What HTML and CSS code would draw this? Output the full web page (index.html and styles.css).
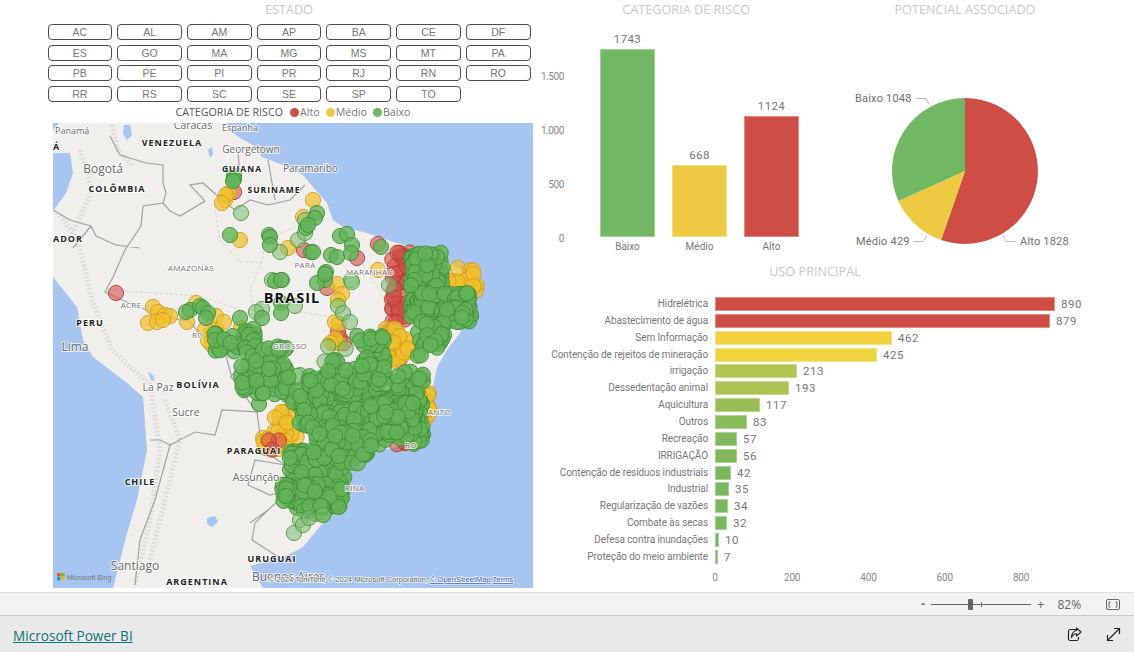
FILE: index.html
```html
<!DOCTYPE html>
<html lang="pt-BR">
<head>
<meta charset="utf-8">
<title>Microsoft Power BI</title>
<link rel="stylesheet" href="styles.css">
</head>
<body>
<div class="app">
  <main class="report">
    <section class="left">
      <h2 class="title">ESTADO</h2>
      <div class="slicer">
        <button>AC</button><button>AL</button><button>AM</button><button>AP</button><button>BA</button><button>CE</button><button>DF</button>
        <button>ES</button><button>GO</button><button>MA</button><button>MG</button><button>MS</button><button>MT</button><button>PA</button>
        <button>PB</button><button>PE</button><button>PI</button><button>PR</button><button>RJ</button><button>RN</button><button>RO</button>
        <button>RR</button><button>RS</button><button>SC</button><button>SE</button><button>SP</button><button>TO</button>
      </div>
      <div class="legend">
        <strong>CATEGORIA DE RISCO</strong>
        <span class="key"><i class="dot red"></i>Alto</span>
        <span class="key"><i class="dot yellow"></i>Médio</span>
        <span class="key"><i class="dot green"></i>Baixo</span>
      </div>
      <svg class="map" viewBox="53 123 480 465" xmlns="http://www.w3.org/2000/svg">
        <rect x="53" y="123" width="480" height="465" fill="#a6c5f0"/>
        <path class="land" d="M59 123H225L232 132 240 138 253 145 262 157 283 165 303 175 313 187 327 203 333 220 343 227 367 233 397 243 417 248 450 263 473 277 478 290 473 313 460 333 447 350 437 367 430 400 427 417 417 443 383 450 350 463 345 483 343 500 317 530 303 547 298 550 283 557 262 563 250 566 263 588H113L127 533 137 500 147 450 143 397 127 383 93 357 83 340 77 307 53 277V211L66 193 73 173 70 153H53V130Z"/>
        <path class="relief" d="M60 215 78 240 92 300 112 350 150 385 160 450 150 520 135 585M112 125 118 150 132 165M80 150 92 190 72 235M165 400 180 440 165 500 150 560"/>
        <path class="lake" d="M124 125h6l2 10-5 5-4-6zM207 518l8-2 3 6-6 5-5-3zM148 372l5 3 2 6-4-1zM208 150l4-3 1 7-3 4z"/>
        <path class="border" d="M110 136 120 155 146 163 163 165 163 183 166 193 163 203 143 206 141 226 125 250 113 277 105 292 122 300 146 310 160 315 190 322M163 203 170 211 180 216 205 201 190 185 203 183 222 200 235 210 250 200 268 205 290 200 305 185M53 210 70 220 91 226 96 236 116 245 140 248M73 248 91 226M190 322 205 340 225 352 232 378 250 403 257 412 222 410 215 435 195 432 170 445 160 440 150 440M257 412 262 450 285 465 255 460 248 485 270 495 290 490M250 350 230 378M285 465 290 490 268 510 255 523 252 540 280 558M170 445 155 500 140 540 135 585M268 510 250 523M268 160 275 200M238 150 240 180"/>
        <path class="state" d="M215 210 220 240 240 262 262 262 265 240 300 225M262 262 250 290 255 315 300 312 350 320M300 225 330 265 340 300 330 340M355 235 365 270 380 290M380 290 400 340 395 380M255 315 275 370 330 375 375 390M110 290 200 296 255 315"/>
        <g id="bubbles"></g>
        <g class="lbl">
          <text x="55" y="134" class="sm">Panamá</text>
          <text x="53" y="150" class="cap">Á</text>
          <text x="193" y="129" class="md" text-anchor="middle">Caracas</text>
          <text x="240" y="131" class="sm" text-anchor="middle">Espanha</text>
          <text x="172" y="146" class="cap" text-anchor="middle">VENEZUELA</text>
          <text x="251" y="153" class="sm2" text-anchor="middle">Georgetown</text>
          <text x="103" y="173" class="lg" text-anchor="middle">Bogotá</text>
          <text x="283" y="172" class="sm2">Paramaribo</text>
          <text x="242" y="172" class="cap2" text-anchor="middle">GUIANA</text>
          <text x="117" y="192" class="cap" text-anchor="middle">COLÔMBIA</text>
          <text x="274" y="193" class="cap2" text-anchor="middle">SURINAME</text>
          <text x="53" y="242" class="cap">ADOR</text>
          <text x="191" y="271" class="st" text-anchor="middle">AMAZONAS</text>
          <text x="305" y="268" class="st" text-anchor="middle">PARÁ</text>
          <text x="370" y="275" class="st" text-anchor="middle">MARANHÃO</text>
          <text x="292" y="303" class="big" text-anchor="middle">BRASIL</text>
          <text x="131" y="308" class="st" text-anchor="middle">ACRE</text>
          <text x="90" y="326" class="cap" text-anchor="middle">PERU</text>
          <text x="75" y="351" class="lg" text-anchor="middle">Lima</text>
          <text x="192" y="338" class="st">RO</text>
          <text x="290" y="349" class="st" text-anchor="middle">GROSSO</text>
        </g>
        <g class="lbl">
          <text x="198" y="388" class="cap" text-anchor="middle">BOLÍVIA</text>
          <text x="158" y="391" class="md" text-anchor="middle">La Paz</text>
          <text x="186" y="416" class="md" text-anchor="middle">Sucre</text>
          <text x="254" y="454" class="cap" text-anchor="middle">PARAGUAI</text>
          <text x="256" y="481" class="md" text-anchor="middle">Assunção</text>
          <text x="140" y="485" class="cap" text-anchor="middle">CHILE</text>
          <text x="272" y="562" class="cap" text-anchor="middle">URUGUAI</text>
          <text x="135" y="570" class="lg" text-anchor="middle">Santiago</text>
          <text x="197" y="585" class="cap" text-anchor="middle">ARGENTINA</text>
          <text x="252" y="581" class="lg">Buenos Aires</text>
          <text x="428" y="415" class="st">ANTO</text>
          <text x="405" y="448" class="st">RO</text>
          <text x="345" y="491" class="st">RINA</text>
        </g>
        <rect x="57" y="573" width="3.500" height="3.500" fill="#f25022"/><rect x="61" y="573" width="3.500" height="3.500" fill="#7fba00"/><rect x="57" y="577" width="3.500" height="3.500" fill="#00a4ef"/><rect x="61" y="577" width="3.500" height="3.500" fill="#ffb900"/>
        <text x="67" y="580" class="bing">Microsoft Bing</text>
        <text x="269" y="582" class="attr">© 2024 TomTom, © 2024 Microsoft Corporation, <tspan class="attr-link">© OpenStreetMap</tspan>  <tspan class="attr-link">Terms</tspan></text>
      </svg>
    </section>
    <section class="right">
      <div class="top">
        <div class="panel">
          <h2 class="title">CATEGORIA DE RISCO</h2>
          <div class="colchart">
            <div class="yaxis"><span>1.500</span><span>1.000</span><span>500</span><span>0</span></div>
            <div class="cols">
              <div class="col"><span class="val">1743</span><div class="colbar c-green" style="height:188px"></div><span class="cat">Baixo</span></div>
              <div class="col"><span class="val">668</span><div class="colbar c-yellow" style="height:72px"></div><span class="cat">Médio</span></div>
              <div class="col"><span class="val">1124</span><div class="colbar c-red" style="height:121px"></div><span class="cat">Alto</span></div>
            </div>
          </div>
        </div>
        <div class="panel">
          <h2 class="title">POTENCIAL ASSOCIADO</h2>
          <svg class="pie" viewBox="832 18 266 244" xmlns="http://www.w3.org/2000/svg">
            <path fill="#ce4e46" d="M965 171V98A73 73 0 1 1 941.1 240Z"/>
            <path fill="#eec944" d="M965 171 941.1 240A73 73 0 0 1 898.5 201.1Z"/>
            <path fill="#72b763" d="M965 171 898.5 201.1A73 73 0 0 1 965 98Z"/>
            <path class="leader" d="M916 98.500h10l3 6M913 241.500h10l4-6M1016 241.500h-10l-3-6"/>
            <text x="855" y="102" class="pielbl">Baixo 1048</text>
            <text x="856" y="245" class="pielbl">Médio 429</text>
            <text x="1020" y="245" class="pielbl">Alto 1828</text>
          </svg>
        </div>
      </div>
      <div class="bottom">
        <h2 class="title">USO PRINCIPAL</h2>
        <div class="hbars">
          <div class="row"><span class="rlabel">Hidrelétrica</span><div class="hbar" style="width:340px;background-color:#ce4e46"></div><span class="rval">890</span></div>
          <div class="row"><span class="rlabel">Abastecimento de água</span><div class="hbar" style="width:335px;background-color:#ce4e46"></div><span class="rval">879</span></div>
          <div class="row"><span class="rlabel">Sem Informação</span><div class="hbar" style="width:177px;background-color:#f3d03f"></div><span class="rval">462</span></div>
          <div class="row"><span class="rlabel">Contenção de rejeitos de mineração</span><div class="hbar" style="width:162px;background-color:#f0d43f"></div><span class="rval">425</span></div>
          <div class="row"><span class="rlabel">irrigação</span><div class="hbar" style="width:82px;background-color:#afc451"></div><span class="rval">213</span></div>
          <div class="row"><span class="rlabel">Dessedentação animal</span><div class="hbar" style="width:74px;background-color:#abc351"></div><span class="rval">193</span></div>
          <div class="row"><span class="rlabel">Aquicultura</span><div class="hbar" style="width:45px;background-color:#96be55"></div><span class="rval">117</span></div>
          <div class="row"><span class="rlabel">Outros</span><div class="hbar" style="width:32px;background-color:#87ba58"></div><span class="rval">83</span></div>
          <div class="row"><span class="rlabel">Recreação</span><div class="hbar" style="width:22px;background-color:#80b85b"></div><span class="rval">57</span></div>
          <div class="row"><span class="rlabel">IRRIGAÇÃO</span><div class="hbar" style="width:22px;background-color:#80b85b"></div><span class="rval">56</span></div>
          <div class="row"><span class="rlabel">Contenção de resíduos industriais</span><div class="hbar" style="width:16px;background-color:#7ab85d"></div><span class="rval">42</span></div>
          <div class="row"><span class="rlabel">Industrial</span><div class="hbar" style="width:14px;background-color:#78b85e"></div><span class="rval">35</span></div>
          <div class="row"><span class="rlabel">Regularização de vazões</span><div class="hbar" style="width:13px;background-color:#78b85e"></div><span class="rval">34</span></div>
          <div class="row"><span class="rlabel">Combate às secas</span><div class="hbar" style="width:12px;background-color:#78b85e"></div><span class="rval">32</span></div>
          <div class="row"><span class="rlabel">Defesa contra inundações</span><div class="hbar" style="width:4px;background-color:#72b763"></div><span class="rval">10</span></div>
          <div class="row"><span class="rlabel">Proteção do meio ambiente</span><div class="hbar" style="width:3px;background-color:#72b763"></div><span class="rval">7</span></div>
        </div>
        <div class="xaxis"><span>0</span><span>200</span><span>400</span><span>600</span><span>800</span></div>
      </div>
    </section>
  </main>
  <div class="zoombar">
    <span class="zminus">-</span>
    <div class="zslider"><i class="ztick"></i><i class="zthumb"></i></div>
    <span class="zplus">+</span>
    <span class="zpct">82%</span>
    <svg class="zfit" width="14" height="11" viewBox="0 0 14 11" xmlns="http://www.w3.org/2000/svg"><rect x=".5" y=".5" width="13" height="10" rx="1.500" fill="none" stroke="#666"/><path d="M4.500 3H3v5h1.500M9.500 3H11v5H9.500" fill="none" stroke="#666"/></svg>
  </div>
  <footer class="footer">
    <a class="brand" href="#">Microsoft Power BI</a>
    <div class="actions">
      <svg width="15" height="15" viewBox="0 0 15 15" xmlns="http://www.w3.org/2000/svg"><path d="M9.500 2.500H3A1.800 1.800 0 0 0 1.500 4v8A1.800 1.800 0 0 0 3 13.500h7A1.800 1.800 0 0 0 11.500 12V10" fill="none" stroke="#222" stroke-width="1.200"/><path d="M9.500 1 14 5 9.500 9V6.800C7 6.800 5.500 8 4.500 10.500 4.500 7 6.500 3.800 9.500 3.500Z" fill="none" stroke="#222" stroke-width="1.100" stroke-linejoin="round"/></svg>
      <svg width="15" height="15" viewBox="0 0 15 15" xmlns="http://www.w3.org/2000/svg"><path d="M1.500 13.500 13.500 1.500M8 1.500h5.500V7M1.500 8v5.500H7" fill="none" stroke="#222" stroke-width="1.200"/></svg>
    </div>
  </footer>
</div>
<script src="map.js"></script>
</body>
</html>
```

FILE: styles.css
```css
* { box-sizing: border-box; }
html, body { margin: 0; height: 100%; background: #fff; overflow: hidden; }
body { font-family: "Open Sans", "Liberation Sans", sans-serif; }
.app { width: 1134px; height: 652px; display: flex; flex-direction: column; }
.report { height: 592px; flex: none; display: flex; background: #fff; }
.left { width: 540px; }
.right { width: 594px; }
.title { margin: 0; height: 18px; font-size: 12.700px; line-height: 19px; font-weight: 400; text-align: center; color: #c8c8c8; }
.left .title { margin-left: 38px; }

.slicer { margin: 6px 0 0 47.5px; width: 483px; display: grid; grid-template-columns: repeat(7, 1fr); grid-auto-rows: 16px; gap: 4.6px 5px; }
.slicer button { padding: 0; background: #fff; border: 1px solid #4c4c4c; border-radius: 4px; font: 10.5px/14px "Liberation Sans", sans-serif; color: #777; }

.legend { margin-top: 3.500px; height: 14px; display: flex; align-items: center; justify-content: center; gap: 6px; padding-left: 46px; font-size: 10.7px; color: #777; }
.legend strong { font-weight: 500; color: #555; margin-right: 1px; }
.key { display: flex; align-items: center; gap: 1px; }
.dot { width: 9px; height: 9px; border-radius: 50%; }
.dot.red { background: #ce4e46; }
.dot.yellow { background: #eec944; }
.dot.green { background: #72b763; }

.map { display: block; margin: 4px 0 0 53px; width: 480px; height: 465px; }
.land { fill: #f0efec; }
.relief { fill: none; stroke: #dfddd9; stroke-width: 5; stroke-dasharray: 2 2; }
.lake { fill: #a6c5f0; }
.border { fill: none; stroke: #a2a2a2; stroke-width: 1.200; }
.state { fill: none; stroke: #cfcdc9; stroke-width: .8; stroke-dasharray: 3 2; }
.lbl text { font-family: "Open Sans", sans-serif; paint-order: stroke; stroke: rgba(255,255,255,.75); stroke-width: 2px; fill: #6a6a6a; }
.lbl .sm { font-size: 9px; }
.lbl .sm2 { font-size: 10px; }
.lbl .md { font-size: 10.5px; }
.lbl .lg { font-size: 12px; }
.lbl .cap { font-size: 9px; font-weight: 700; letter-spacing: 1px; fill: #222; }
.lbl .cap2 { font-size: 8.5px; font-weight: 700; letter-spacing: 1px; fill: #222; }
.lbl .st { font-size: 8px; letter-spacing: .3px; fill: #7a6f6f; }
.lbl .big { font-size: 14.500px; font-weight: 700; letter-spacing: 1px; fill: #111; }
.bing { font: 7px "Liberation Sans", sans-serif; fill: #777; }
.attr { font: 7.500px "Liberation Sans", sans-serif; fill: #666; paint-order: stroke; stroke: rgba(255,255,255,.8); stroke-width: 1.500px; }
.attr-link { fill: #3a5fb0; text-decoration: underline; }

.top { height: 262px; display: grid; grid-template-columns: 292px 266px; }
.colchart { display: flex; height: 244px; }
.yaxis { width: 24px; height: 228px; display: flex; flex-direction: column; justify-content: flex-end; align-items: flex-end; gap: 40px; font: 10px/14px Roboto, sans-serif; letter-spacing: -.4px; color: #888; }
.cols { display: flex; align-items: flex-end; gap: 17px; margin-left: 36px; height: 237px; }
.col { width: 55px; display: flex; flex-direction: column; align-items: center; }
.val { font: 11.500px/16px Roboto, sans-serif; letter-spacing: .4px; color: #777; margin-bottom: 2px; }
.colbar { width: 55px; border: 1px solid rgba(255,255,255,.35); }
.c-green { background: #72b763; }
.c-yellow { background: #eec944; }
.c-red { background: #ce4e46; }
.cat { font: 10px/16px Roboto, sans-serif; color: #777; margin-top: 2px; }
.pie { display: block; width: 266px; height: 244px; }
.leader { fill: none; stroke: #bbb; }
.pielbl { font: 11px Roboto, sans-serif; letter-spacing: .2px; fill: #6f6f6f; }

.bottom .title { width: 550px; }
.hbars { margin-top: 15.500px; display: grid; grid-auto-rows: 16.870px; }
.row { display: flex; align-items: center; }
.rlabel { width: 168px; margin-right: 7px; font: 10px/14px Roboto, sans-serif; letter-spacing: -.09px; text-align: right; color: #777; white-space: nowrap; }
.hbar { height: 14px; border: 1px solid rgba(255,255,255,.35); }
.rval { margin-left: 6px; font: 11.500px/14px Roboto, sans-serif; letter-spacing: .5px; color: #777; }
.xaxis { display: flex; margin: 6px 0 0 165px; font: 10px/14px Roboto, sans-serif; letter-spacing: -.2px; color: #888; }
.xaxis span { width: 76.300px; text-align: center; }
.xaxis span:first-child { width: 20px; }
.xaxis span:nth-child(2) { margin-left: 29px; }

.zoombar { height: 24px; flex: none; display: flex; align-items: center; background: #f3f3f3; border-top: 1px solid #e0e0e0; border-bottom: 1px solid #c8c8c8; color: #666; padding-left: 921px; }
.zminus { width: 5px; font: 700 12px/12px "Liberation Sans", sans-serif; }
.zslider { position: relative; width: 100px; height: 1px; margin-left: 5px; background: #666; }
.ztick { position: absolute; left: 50px; top: -2px; width: 1px; height: 5px; background: #666; }
.zthumb { position: absolute; left: 37px; top: -5px; width: 5px; height: 11px; background: #666; border-radius: 1px; }
.zplus { margin-left: 6px; font: 13px/13px "Open Sans", sans-serif; }
.zpct { margin-left: 13px; font-size: 12px; }
.zfit { margin-left: 25px; }

.footer { flex: 1; display: flex; align-items: center; justify-content: space-between; padding: 3px 13px 0; background: #e9e9e9; }
.brand { font-size: 13.600px; color: #0f7377; text-decoration: underline; }
.actions { display: flex; gap: 24px; margin-top: -2px; }
```

FILE: map.js
```js
(function () {
  var NS = "http://www.w3.org/2000/svg";
  var root = document.getElementById("bubbles");
  var seed = 20240;
  function rnd() { seed = (seed * 16807) % 2147483647; return seed / 2147483647; }
  var STYLE = {
    r: ["#d2504a", "#b83a33", 0.6],
    y: ["#f0c02e", "#cf9d1e", 0.72],
    g: ["#64b35a", "#3f8f34", 0.8],
    p: ["#7cbd72", "#4f9a45", 0.55]
  };
  function dot(kind, x, y) {
    var s = STYLE[kind], c = document.createElementNS(NS, "circle");
    c.setAttribute("cx", x.toFixed(1));
    c.setAttribute("cy", y.toFixed(1));
    c.setAttribute("r", "7.6");
    c.setAttribute("fill", s[0]);
    c.setAttribute("fill-opacity", s[2]);
    c.setAttribute("stroke", s[1]);
    c.setAttribute("stroke-opacity", ".9");
    root.appendChild(c);
  }
  function box(kind, x0, y0, x1, y1, n) {
    for (var i = 0; i < n; i++) dot(kind, x0 + rnd() * (x1 - x0), y0 + rnd() * (y1 - y0));
  }
  var S = [
    ["r", 116, 293], ["r", 234, 192], ["r", 357, 258], ["r", 378, 244], ["r", 327, 288], ["r", 304, 250],
    ["y", 225, 200], ["y", 229, 193], ["y", 226, 195], ["y", 222, 203], ["y", 240, 240], ["y", 313, 200], ["y", 288, 248], ["y", 378, 270],
    ["y", 153, 307], ["y", 158, 312], ["y", 165, 315], ["y", 170, 316], ["y", 148, 323], ["y", 157, 322], ["y", 163, 320],
    ["y", 337, 284], ["y", 342, 294], ["y", 338, 300], ["y", 335, 322], ["y", 241, 328], ["y", 187, 322], ["y", 196, 303], ["y", 216, 316], ["y", 224, 322], ["y", 303, 217],
    ["p", 241, 213], ["p", 280, 252], ["p", 338, 306], ["p", 351, 280], ["p", 352, 282], ["p", 389, 285], ["p", 295, 306], ["p", 262, 309], ["p", 256, 312], ["p", 343, 313], ["p", 350, 322], ["p", 272, 280], ["p", 282, 280], ["p", 305, 220], ["p", 298, 240], ["p", 305, 233],
    ["g", 234, 176], ["g", 234, 179], ["g", 233, 181], ["g", 230, 235], ["g", 269, 235], ["g", 270, 237], ["g", 270, 245], ["g", 311, 252], ["g", 313, 252], ["g", 317, 213], ["g", 315, 218], ["g", 306, 228], ["g", 308, 225], ["g", 331, 255], ["g", 337, 257], ["g", 340, 236], ["g", 347, 234], ["g", 352, 245], ["g", 351, 253], ["g", 381, 247],
    ["g", 275, 281], ["g", 281, 280], ["g", 325, 280], ["g", 326, 272], ["g", 317, 283], ["g", 325, 274], ["g", 281, 303], ["g", 281, 313], ["g", 262, 318], ["g", 240, 318], ["g", 190, 310], ["g", 200, 306], ["g", 203, 308], ["g", 208, 313], ["g", 206, 318], ["g", 186, 312],
    ["g", 259, 404]
  ];
  box("r", 391, 250, 412, 322, 38);
  box("r", 382, 322, 402, 362, 18);
  box("r", 322, 330, 345, 345, 4);
  box("y", 448, 268, 477, 298, 30);
  box("y", 385, 325, 410, 365, 20);
  box("y", 262, 410, 297, 450, 28);
  box("y", 418, 392, 430, 425, 14);
  box("y", 328, 322, 345, 345, 5);
  box("y", 205, 320, 228, 345, 8);
  box("r", 395, 438, 410, 447, 5);
  box("r", 268, 440, 280, 452, 3);
  box("p", 322, 338, 385, 395, 18);
  box("p", 295, 375, 350, 420, 16);
  box("p", 360, 345, 385, 368, 4);
  S.forEach(function (d) { dot(d[0], d[1], d[2]); });
  box("g", 410, 252, 443, 318, 170);
  box("g", 444, 292, 472, 322, 80);
  box("g", 417, 318, 445, 348, 34);
  box("g", 214, 328, 255, 352, 36);
  box("g", 240, 346, 290, 395, 70);
  box("g", 288, 375, 345, 410, 50);
  box("g", 298, 410, 345, 430, 30);
  box("g", 345, 375, 425, 445, 170);
  box("g", 368, 402, 416, 436, 130);
  box("g", 355, 335, 385, 385, 40);
  box("g", 328, 358, 355, 395, 14);
  box("g", 290, 450, 345, 490, 130);
  box("g", 282, 484, 343, 508, 100);
  box("g", 295, 505, 325, 515, 14);
  box("g", 310, 425, 372, 465, 55);
  box("g", 395, 355, 425, 380, 8);
  [["p", 294, 533], ["p", 300, 520], ["p", 303, 525], ["p", 309, 518], ["p", 323, 515], ["g", 290, 458]].forEach(function (d) { dot(d[0], d[1], d[2]); });
})();
```
